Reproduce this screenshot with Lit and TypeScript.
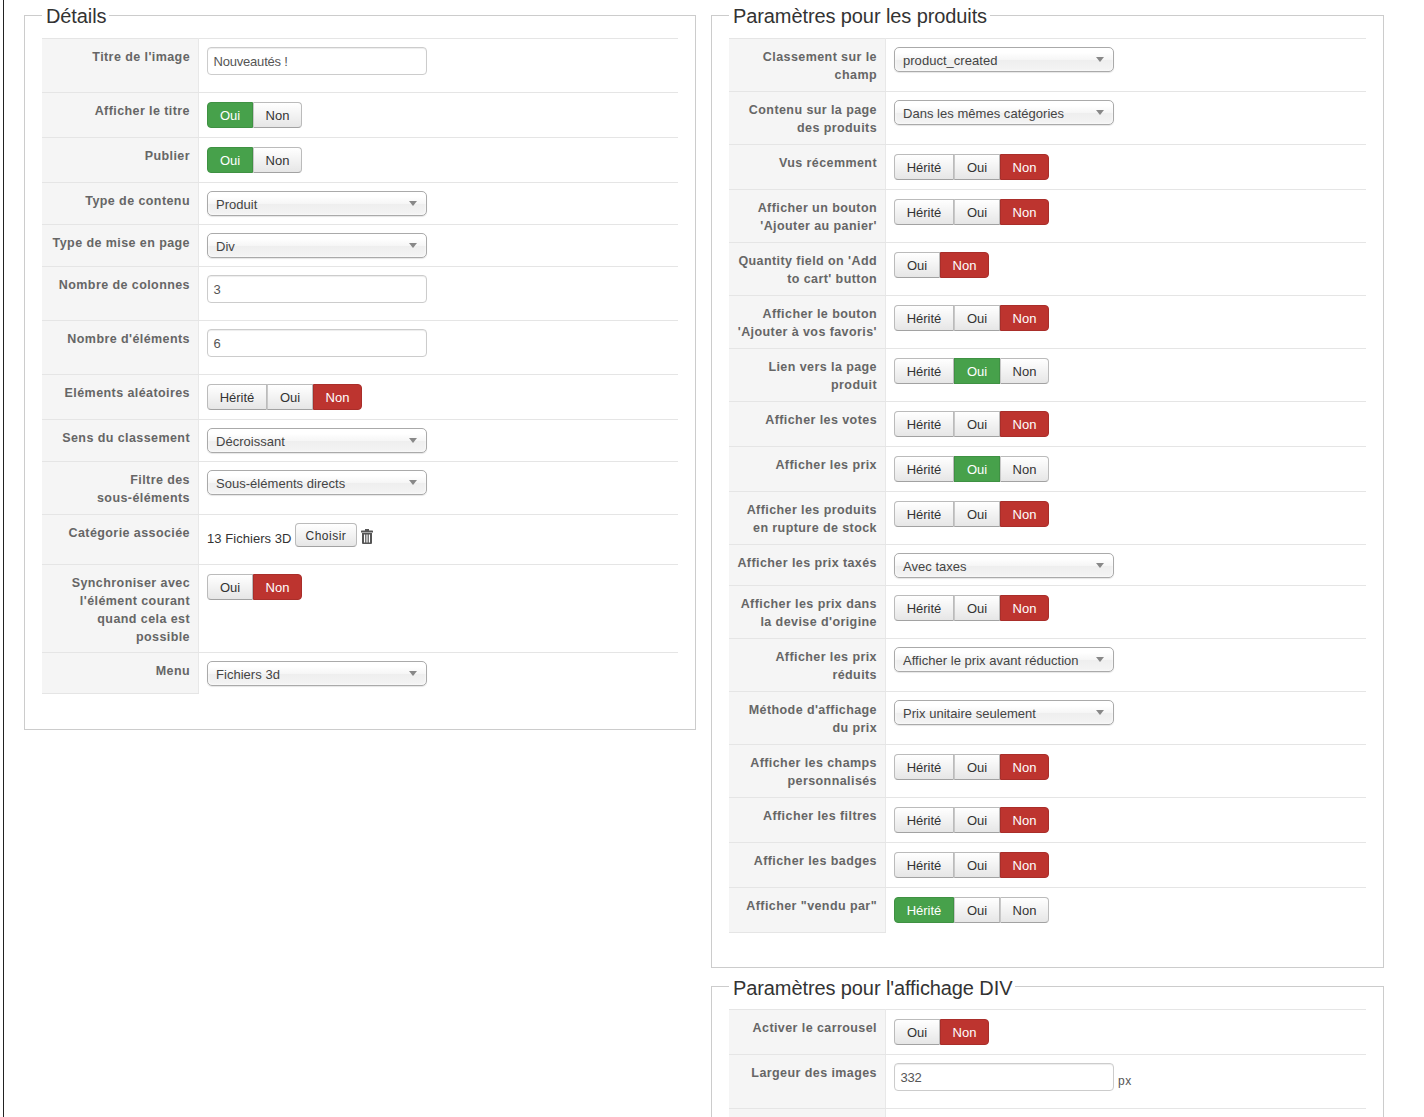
import { LitElement, html, css } from "lit";
import { customElement } from "lit/decorators.js";

type Row = { l: string; t: "sel" | "btn" | "inp" | "cat" | "blank"; v?: string; opts?: string[]; on?: string; px?: boolean; tight?: boolean };

const OR = (on: string, l: string): Row => ({ l, t: "btn", opts: ["Oui", "Non"], on });
const HON = (on: string, l: string): Row => ({ l, t: "btn", opts: ["Hérité", "Oui", "Non"], on });
const S = (l: string, v: string, tight = false): Row => ({ l, t: "sel", v, tight });
const I = (l: string, v: string): Row => ({ l, t: "inp", v });

const details: Row[] = [
  I("Titre de l'image", "Nouveautés !"),
  OR("Oui", "Afficher le titre"),
  OR("Oui", "Publier"),
  S("Type de contenu", "Produit"),
  S("Type de mise en page", "Div"),
  I("Nombre de colonnes", "3"),
  I("Nombre d'éléments", "6"),
  HON("Non", "Eléments aléatoires"),
  S("Sens du classement", "Décroissant"),
  S("Filtre des sous-\u2060éléments", "Sous-éléments directs"),
  { l: "Catégorie associée", t: "cat" },
  { ...OR("Non", "Synchroniser avec l'élément courant quand cela est possible"), tight: true },
  S("Menu", "Fichiers 3d", true),
];

const produits: Row[] = [
  S("Classement sur le champ", "product_created"),
  S("Contenu sur la page des produits", "Dans les mêmes catégories"),
  HON("Non", "Vus récemment"),
  HON("Non", "Afficher un bouton 'Ajouter au panier'"),
  OR("Non", "Quantity field on 'Add to cart' button"),
  HON("Non", "Afficher le bouton 'Ajouter à vos favoris'"),
  HON("Oui", "Lien vers la page produit"),
  HON("Non", "Afficher les votes"),
  HON("Oui", "Afficher les prix"),
  HON("Non", "Afficher les produits en rupture de stock"),
  S("Afficher les prix taxés", "Avec taxes", true),
  HON("Non", "Afficher les prix dans la devise d'origine"),
  S("Afficher les prix réduits", "Afficher le prix avant réduction"),
  S("Méthode d'affichage du prix", "Prix unitaire seulement"),
  HON("Non", "Afficher les champs personnalisés"),
  HON("Non", "Afficher les filtres"),
  HON("Non", "Afficher les badges"),
  HON("Hérité", 'Afficher "vendu par"'),
];

const div: Row[] = [
  OR("Non", "Activer le carrousel"),
  { ...I("Largeur des images", "332"), px: true },
  { l: "", t: "blank" },
];

@customElement("app-root")
export class AppRoot extends LitElement {
  static styles = css`
    :host {
      display: block;
      height: 1117px;
      overflow: hidden;
      box-sizing: border-box;
      font-family: "Liberation Sans", Arial, sans-serif;
      font-size: 13px;
      color: #333;
      background: #fff;
    }
    .page {
      margin-left: 3px;
      border-left: 1px solid #222;
      height: 1117px;
      box-sizing: border-box;
      padding: 3px 0 0 20px;
      display: flex;
      gap: 15px;
      align-items: flex-start;
    }
    .col { display: flex; flex-direction: column; gap: 7px; }
    .col.l { width: 672px; }
    .col.r { width: 673px; }
    fieldset {
      margin: 0;
      min-width: 0;
      border: 1px solid #ccc;
      padding: 11px 17px 35px;
    }
    fieldset.produits { padding-bottom: 34px; }
    fieldset.affichage { padding-top: 10px; }
    legend {
      padding: 2px 3px 0 4px;
      font-size: 20px;
      line-height: 22px;
      letter-spacing: -0.1px;
      color: #333;
    }
    table { width: 100%; border-collapse: collapse; table-layout: fixed; }
    th {
      width: 141px;
      box-sizing: content-box;
      background: #f5f5f5;
      border-top: 1px solid #e5e5e5;
      border-bottom: 1px solid #e5e5e5;
      border-right: 1px solid #e8e8e8;
      padding: 9px 8px 7px 7px;
      text-align: right;
      vertical-align: top;
      font-weight: bold;
      font-size: 12.5px;
      line-height: 18px;
      letter-spacing: 0.42px;
      color: #666;
    }
    th.tight { padding-bottom: 6px; }
    td {
      border-top: 1px solid #e5e5e5;
      padding: 8px;
      vertical-align: top;
      line-height: 18px;
    }
    td.tight { padding-bottom: 7px; }
    .sel {
      box-sizing: border-box;
      width: 220px;
      height: 25px;
      padding: 2px 8px 0;
      border: 1px solid #aaa;
      border-radius: 5px;
      background: linear-gradient(#fff 20%, #f6f6f6 50%, #eee 52%, #f4f4f4 100%);
      box-shadow: inset 0 0 3px #fff, 0 1px 1px rgba(0, 0, 0, 0.1);
      color: #444;
      display: flex;
      align-items: center;
      justify-content: space-between;
      letter-spacing: 0.03px;
    }
    .arrow {
      width: 0;
      height: 0;
      margin-right: 1px;
      margin-top: -3px;
      border-left: 4px solid transparent;
      border-right: 4px solid transparent;
      border-top: 5px solid #888;
    }
    .inp {
      box-sizing: border-box;
      width: 220px;
      height: 28px;
      padding: 1px 6px 0 5.5px;
      margin-bottom: 9px;
      border: 1px solid #ccc;
      border-radius: 4px;
      box-shadow: inset 0 1px 1px rgba(0, 0, 0, 0.075);
      color: #555;
      line-height: 26px;
      letter-spacing: -0.2px;
    }
    .inprow { display: flex; align-items: flex-start; gap: 4px; }
    .px { margin-top: 9px; font-size: 12px; color: #555; letter-spacing: 0.5px; }
    .grp { display: flex; margin: 1px 0; }
    .b {
      box-sizing: border-box;
      height: 26px;
      line-height: 24px;
      padding-top: 1px;
      border: 1px solid #bbb;
      border-bottom-color: #a2a2a2;
      border-left-width: 0;
      background: linear-gradient(#fff, #e6e6e6);
      color: #333;
      text-align: center;
    }
    .b + .b { border-left: 1px solid #c8c8c8; }
    .b:first-child { border-left-width: 1px; border-radius: 4px 0 0 4px; }
    .b:last-child { border-radius: 0 4px 4px 0; }
    .w-Hérité { width: 60px; }
    .w-Oui { width: 46px; }
    .w-Non { width: 49px; }
    .b.on-Oui, .b.on-Hérité {
      background: #47a14b;
      border-color: #3f9143;
      color: #fff;
    }
    .b.on-Non {
      background: #bd342f;
      border-color: #a92e2a;
      color: #fff;
    }
    .cat { display: flex; align-items: flex-start; height: 33px; }
    .cat-t { margin-top: 7px; letter-spacing: 0.05px; color: #333; }
    .pick {
      box-sizing: border-box;
      height: 24px;
      padding: 1px 10px 0;
      line-height: 22px;
      margin-left: 3px;
      border: 1px solid #bbb;
      border-bottom-color: #a2a2a2;
      border-radius: 4px;
      background: linear-gradient(#fff, #e6e6e6);
      font-size: 12px;
      letter-spacing: 0.5px;
      color: #333;
    }
    .trash { margin: 6px 0 0 4px; display: block; }
    .blank { height: 60px; }
  `;

  private cell(r: Row) {
    switch (r.t) {
      case "sel":
        return html`<div class="sel"><span>${r.v}</span><span class="arrow"></span></div>`;
      case "inp":
        return r.px
          ? html`<div class="inprow"><div class="inp">${r.v}</div><span class="px">px</span></div>`
          : html`<div class="inp">${r.v}</div>`;
      case "btn":
        return html`<div class="grp">
          ${r.opts!.map((o) => html`<div class="b w-${o} ${o === r.on ? `on-${o}` : ""}">${o}</div>`)}
        </div>`;
      case "cat":
        return html`<div class="cat">
          <span class="cat-t">13 Fichiers 3D</span>
          <div class="pick">Choisir</div>
          <svg class="trash" width="12" height="15" viewBox="0 0 12 15" fill="#555">
            <path d="M4 0h4v1.5h3.6a.4.4 0 0 1 .4.4V3.4H0V1.9a.4.4 0 0 1 .4-.4H4z" />
            <path d="M1 4h10v10a1 1 0 0 1-1 1H2a1 1 0 0 1-1-1zM3 5.5v8h1.2v-8zm2.4 0v8h1.2v-8zm2.4 0v8H9v-8z" fill-rule="evenodd" />
          </svg>
        </div>`;
      default:
        return html`<div class="blank"></div>`;
    }
  }

  private set(title: string, rows: Row[], cls = "") {
    return html`<fieldset class="${cls}">
      <legend>${title}</legend>
      <table>
        ${rows.map(
          (r) => html`<tr>
            <th class="${r.tight ? "tight" : ""}">${r.l}</th>
            <td class="${r.tight && r.t === "sel" ? "tight" : ""}">${this.cell(r)}</td>
          </tr>`
        )}
      </table>
    </fieldset>`;
  }

  render() {
    return html`<div class="page">
      <div class="col l">${this.set("Détails", details)}</div>
      <div class="col r">
        ${this.set("Paramètres pour les produits", produits, "produits")}
        ${this.set("Paramètres pour l'affichage DIV", div, "affichage")}
      </div>
    </div>`;
  }
}
